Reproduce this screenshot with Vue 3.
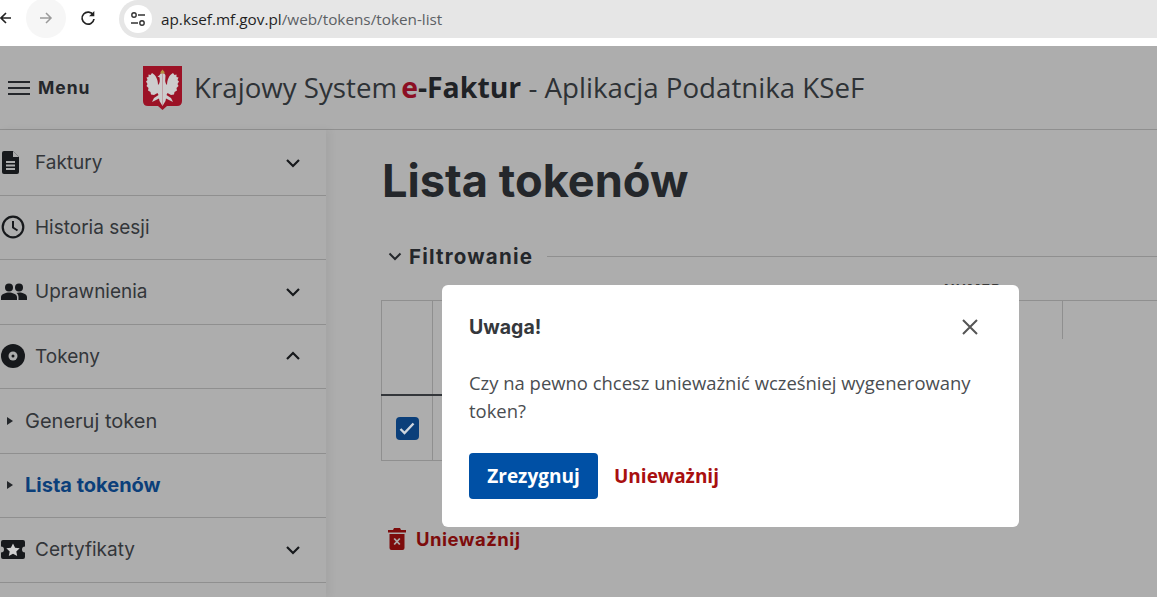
<script setup>
const menu = [
  { label: 'Faktury', icon: 'doc', chevron: 'down' },
  { label: 'Historia sesji', icon: 'clock' },
  { label: 'Uprawnienia', icon: 'people', chevron: 'down' },
  { label: 'Tokeny', icon: 'disc', chevron: 'up' },
  { label: 'Generuj token', sub: true },
  { label: 'Lista tokenów', sub: true, active: true },
  { label: 'Certyfikaty', icon: 'ticket', chevron: 'down' },
]
const eagleHalf = 'M19.5 8C17.8 8 16.800 9 16.500 10.800L16.800 16C16.500 18 16 19 15 20C15 15 13 10 9 8L7.500 10L5.500 9.500L5.500 12L3.500 12.500L4.500 15L3 16.500L4.500 19L3.500 21L5.500 23L5 25.500L7.500 27L8 29.500L11 30L14.500 28L15.500 30L11 33L9 37L13 35L16 33.500L16.500 36L19.500 41Z'
</script>

<template>
  <div class="page">
    <div class="chrome">
      <svg class="nav back" width="16" height="16" viewBox="0 0 16 16"><path d="M13 8H3M8 3L3 8l5 5" fill="none" stroke="#222" stroke-width="1.6"/></svg>
      <span class="fwd-circle">
        <svg width="16" height="16" viewBox="0 0 16 16"><path d="M2 8h11M8 3l5 5-5 5" fill="none" stroke="#9a9a9a" stroke-width="1.5"/></svg>
      </span>
      <svg class="reload" width="18" height="18" viewBox="0 0 18 18"><path d="M14.300 6.200A6 6 0 1 0 15 10" fill="none" stroke="#222" stroke-width="1.700"/><path d="M15.300 2v5.200h-5.200z" fill="#222"/></svg>
      <div class="omnibox">
        <span class="site-chip">
          <svg width="18" height="16" viewBox="0 0 18 16"><circle cx="5" cy="4" r="2.200" fill="none" stroke="#333" stroke-width="1.400"/><path d="M9 4h7M2 12h7" stroke="#333" stroke-width="1.500"/><circle cx="13" cy="12" r="2.200" fill="none" stroke="#333" stroke-width="1.400"/></svg>
        </span>
        <span class="url"><span class="host">ap.ksef.mf.gov.pl</span>/web/tokens/token-list</span>
      </div>
    </div>

    <header class="topbar">
      <button class="menu-btn">
        <svg width="22" height="16" viewBox="0 0 22 16"><path d="M0 2h22M0 8h22M0 14h22" stroke="#24272b" stroke-width="2"/></svg>
        <span>Menu</span>
      </button>
      <svg class="emblem" width="39" height="46" viewBox="0 0 39 46">
        <path d="M0 1h39v35q0 5-5 5H24l-4.500 4-4.500-4H5q-5 0-5-5z" fill="#9c1226"/>
        <path :d="eagleHalf" fill="#cdcdcd"/>
        <path :d="eagleHalf" fill="#cdcdcd" transform="translate(39 0) scale(-1 1)"/>
        <path d="M17 10l-2.500 1.500 2.500 1z" fill="#cdcdcd"/>
        <path d="M17.500 7l2-2.500 2 2.500v1.500h-4z" fill="#b3923f"/>
      </svg>
      <h1 class="app-title">Krajowy System<span class="brand"><em>e</em>-Faktur</span> - Aplikacja Podatnika KSeF</h1>
    </header>

    <div class="body">
      <nav class="sidebar">
        <div v-for="item in menu" :key="item.label" class="row" :class="{ sub: item.sub, active: item.active }">
          <span v-if="item.sub" class="tri"></span>
          <span v-else class="ico">
            <svg v-if="item.icon === 'doc'" width="20" height="23" viewBox="0 0 20 23"><path d="M3 0h9l6 6v15q0 2-2 2H3q-2 0-2-2V2q0-2 2-2z" fill="#17191c"/><path d="M12 0v6h6" fill="#adadad"/><path d="M5 11h9M5 14.500h9M5 18h9" stroke="#adadad" stroke-width="1.800"/></svg>
            <svg v-else-if="item.icon === 'clock'" width="24" height="24" viewBox="0 0 24 24"><circle cx="12" cy="12" r="10.300" fill="none" stroke="#17191c" stroke-width="2.200"/><path d="M12 6v6.500l4.500 3" fill="none" stroke="#17191c" stroke-width="2"/></svg>
            <svg v-else-if="item.icon === 'people'" width="26" height="18" viewBox="0 0 26 18"><circle cx="8" cy="4.500" r="4" fill="#17191c"/><circle cx="18" cy="4.500" r="4" fill="#17191c"/><path d="M0 17v-3c0-3 5-4.500 8-4.500s8 1.500 8 4.500v3zM17.500 17v-3c0-1.500-.7-3-2-4 1-.3 2-.5 2.900-.5 3 0 7.600 1.500 7.600 4.500v3z" fill="#17191c"/></svg>
            <svg v-else-if="item.icon === 'disc'" width="24" height="24" viewBox="0 0 24 24"><circle cx="12" cy="12" r="12" fill="#17191c"/><circle cx="12" cy="12" r="4.500" fill="#adadad"/><circle cx="12" cy="12" r="1.500" fill="#17191c"/></svg>
            <svg v-else width="24" height="19" viewBox="0 0 24 19"><path d="M2 0h20q2 0 2 2v4.500a3 3 0 0 0 0 6V17q0 2-2 2H2q-2 0-2-2v-4.500a3 3 0 0 0 0-6V2q0-2 2-2z" fill="#17191c"/><path d="M12 3.500l2.100 4.200 4.600.6-3.400 3.200.9 4.600-4.200-2.300-4.200 2.300.9-4.600-3.400-3.200 4.600-.6z" fill="#cfcfcf"/></svg>
          </span>
          <span class="label">{{ item.label }}</span>
          <svg v-if="item.chevron" class="chev" width="16" height="10" viewBox="0 0 16 10">
            <path :d="item.chevron === 'down' ? 'M2 2l6 6 6-6' : 'M2 8l6-6 6 6'" fill="none" stroke="#17191c" stroke-width="2.200"/>
          </svg>
        </div>
      </nav>

      <main class="content">
        <h2 class="title">Lista tokenów</h2>
        <div class="filter">
          <svg width="14" height="9" viewBox="0 0 14 9"><path d="M1.500 1.500L7 7l5.500-5.500" fill="none" stroke="#24272b" stroke-width="2"/></svg>
          <span class="filter-label">Filtrowanie</span>
          <span class="filter-line"></span>
        </div>
        <div class="table-stub">NUMER</div>
        <div class="table">
          <div class="thead">
            <span class="cell-check"></span>
            <span class="cell-main"></span>
            <span class="cell-end"></span>
          </div>
          <div class="thead-rule"></div>
          <div class="tbody">
            <span class="cell-check">
              <span class="checkbox">
                <svg width="16" height="13" viewBox="0 0 16 13"><path d="M1.500 7l4 4 9-9.500" fill="none" stroke="#cfd6de" stroke-width="2.400"/></svg>
              </span>
            </span>
          </div>
        </div>
        <div class="revoke">
          <svg width="18" height="22" viewBox="0 0 18 22"><path d="M6 0h6l1 2h5v2.500H0V2h5zM1.500 6h15v14q0 2-2 2h-11q-2 0-2-2z" fill="#7d0c0c"/><path d="M6.200 10.500l5.600 6M11.800 10.500l-5.600 6" stroke="#adadad" stroke-width="1.800"/></svg>
          <span>Unieważnij</span>
        </div>
      </main>
    </div>

    <div class="modal">
      <div class="modal-head">
        <span class="modal-title">Uwaga!</span>
        <svg width="18" height="18" viewBox="0 0 18 18"><path d="M2 2l14 14M16 2L2 16" stroke="#555" stroke-width="2"/></svg>
      </div>
      <p class="modal-text">Czy na pewno chcesz unieważnić wcześniej wygenerowany token?</p>
      <div class="modal-actions">
        <button class="primary">Zrezygnuj</button>
        <button class="danger">Unieważnij</button>
      </div>
    </div>
  </div>
</template>

<style>
html, body { margin: 0; overflow: hidden; }
</style>

<style scoped>
.page {
  position: relative;
  width: 1157px;
  height: 597px;
  overflow: hidden;
  background: #adadad;
  font-family: "Open Sans", "Noto Sans", sans-serif;
  color: #24272b;
}
.chrome {
  height: 46px;
  box-sizing: border-box;
  background: #fff;
  display: flex;
  align-items: flex-start;
}
.nav.back { margin: 10px 0 0 -2px; }
.fwd-circle {
  width: 40px;
  height: 40px;
  margin: -2px 0 0 12px;
  border-radius: 50%;
  background: #f6f6f6;
  display: flex;
  align-items: center;
  justify-content: center;
}
.reload { margin: 9px 0 0 13px; }
.omnibox {
  flex: 1;
  height: 38px;
  margin: 0 -30px 0 22px;
  border-radius: 19px 0 0 19px;
  background: #e6e6e6;
  display: flex;
  align-items: center;
  padding-left: 5px;
}
.site-chip {
  width: 28px;
  height: 28px;
  border-radius: 50%;
  background: #fff;
  display: flex;
  align-items: center;
  justify-content: center;
}
.url {
  margin-left: 9px;
  font-size: 15.3px;
  color: #5c6064;
  white-space: nowrap;
}
.host { color: #1f1f1f; }

.topbar {
  height: 84px;
  box-sizing: border-box;
  border-bottom: 1px solid #8f8f8f;
  display: flex;
  align-items: center;
  padding-left: 8px;
}
.menu-btn {
  width: 135px;
  display: flex;
  align-items: center;
  gap: 8px;
  padding: 0;
  border: 0;
  background: none;
  font: 700 17.5px Inter, sans-serif;
  letter-spacing: 1px;
  color: #24272b;
}
.emblem { margin-top: 1px; }
.app-title {
  margin: 0 0 2px 12px;
  font-size: 27.7px;
  font-weight: 400;
  color: #2e3236;
  white-space: nowrap;
}
.brand { margin-left: 4px; font-size: 28.4px; font-weight: 700; color: #1f2226; }
.brand em { font-style: normal; color: #8c0f24; }

.body { display: flex; height: 467px; }
.sidebar {
  width: 326px;
  flex: none;
  position: relative;
  padding-top: 1px;
  box-shadow: 4px 0 8px rgba(0, 0, 0, .05);
  font-family: Inter, sans-serif;
}
.row {
  height: 64.5px;
  box-sizing: border-box;
  border-bottom: 1px solid #8f8f8f;
  display: flex;
  align-items: center;
  font-size: 19px;
  color: #33363a;
}
.ico {
  width: 35px;
  flex: none;
  display: flex;
  align-items: center;
  padding-left: 1px;
  box-sizing: border-box;
}
.row.sub { font-size: 20px; }
.tri {
  width: 0;
  height: 0;
  margin: 0 12px 0 7px;
  border-left: 6px solid #24272b;
  border-top: 4px solid transparent;
  border-bottom: 4px solid transparent;
}
.row.active .label { font-weight: 700; color: #0b3f7a; }
.chev { margin-left: auto; margin-right: 25px; }

.content { flex: 1; min-width: 0; padding: 24px 0 0 56px; position: relative; }
.title {
  margin: 0;
  font: 700 45.2px/54px Inter, sans-serif;
  color: #24272b;
  white-space: nowrap;
}
.filter {
  display: flex;
  align-items: center;
  margin: 33px 0 0 6px;
  height: 30px;
}
.filter-label {
  margin-left: 7px;
  font: 700 20.5px Inter, sans-serif;
  letter-spacing: 1.2px;
  color: #24272b;
}
.filter-line { flex: 1; height: 1px; margin-left: 14px; background: #8f8f8f; }
.table-stub {
  height: 14px;
  margin-top: 12px;
  padding-left: 562px;
  font: 700 14px/14px Inter, sans-serif;
  letter-spacing: 1.2px;
  color: #3a3a3a;
}
.table { margin-top: 3px; border-top: 1px solid #8f8f8f; margin-left: -1px; }
.thead { display: flex; height: 93px; }
.thead-rule { width: 300px; height: 2px; background: #33363a; }
.tbody { display: flex; height: 64px; width: 300px; border-bottom: 1px solid #8f8f8f; }
.cell-check {
  width: 50px;
  flex: none;
  border-left: 1px solid #8f8f8f;
  border-right: 1px solid #8f8f8f;
  display: flex;
  align-items: center;
  justify-content: center;
}
.cell-main { width: 629px; flex: none; }
.cell-end { width: 1px; height: 38px; background: #8f8f8f; }
.checkbox {
  width: 23px;
  height: 23px;
  border-radius: 4px;
  background: #0b3f7a;
  display: flex;
  align-items: center;
  justify-content: center;
}
.revoke {
  display: flex;
  align-items: center;
  gap: 10px;
  margin: 67px 0 0 6px;
  font: 700 18.5px Inter, sans-serif;
  letter-spacing: .5px;
  color: #7d0c0c;
}

.modal {
  position: absolute;
  left: 442px;
  top: 285px;
  width: 577px;
  height: 242px;
  box-sizing: border-box;
  background: #fff;
  border-radius: 6px;
  padding: 0 27px;
}
.modal-head {
  height: 84px;
  display: flex;
  align-items: center;
  justify-content: space-between;
  padding-right: 13px;
  box-sizing: border-box;
}
.modal-title { font: 700 19.5px Inter, sans-serif; color: #35383c; }
.modal-text {
  margin: 0;
  width: 510px;
  font-size: 18.45px;
  line-height: 28px;
  color: #4a4d51;
}
.modal-actions { display: flex; align-items: center; margin-top: 28px; gap: 16px; }
.primary {
  width: 129px;
  height: 46px;
  padding: 0;
  border: 0;
  border-radius: 4px;
  background: #0050a5;
  color: #fff;
  font: 700 19px "Open Sans", sans-serif;
}
.danger {
  padding: 0;
  border: 0;
  background: none;
  color: #a80f0f;
  font: 700 19px "Open Sans", sans-serif;
}
</style>
